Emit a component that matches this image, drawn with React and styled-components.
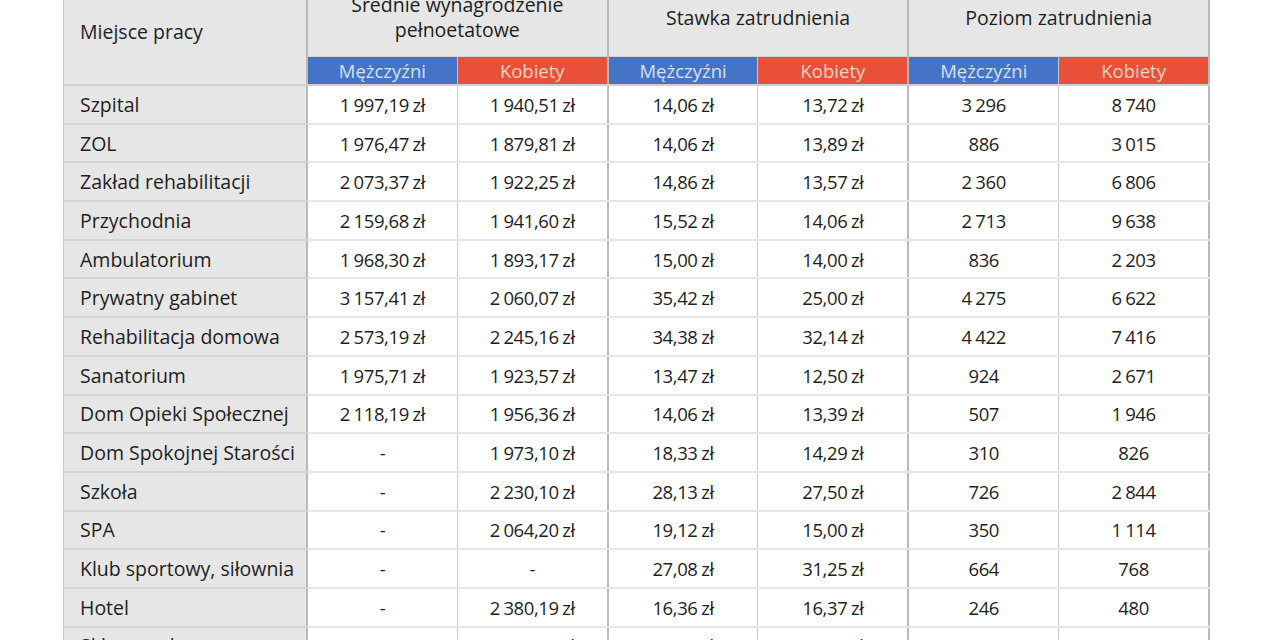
import styled, { createGlobalStyle } from "styled-components";

const GlobalStyle = createGlobalStyle`
  body {
    margin: 0;
    background: #ffffff;
    font-family: "Open Sans", "Noto Sans", sans-serif;
    overflow: hidden;
  }
`;

const rows = [
  ["Szpital", "1 997,19 zł", "1 940,51 zł", "14,06 zł", "13,72 zł", "3 296", "8 740"],
  ["ZOL", "1 976,47 zł", "1 879,81 zł", "14,06 zł", "13,89 zł", "886", "3 015"],
  ["Zakład rehabilitacji", "2 073,37 zł", "1 922,25 zł", "14,86 zł", "13,57 zł", "2 360", "6 806"],
  ["Przychodnia", "2 159,68 zł", "1 941,60 zł", "15,52 zł", "14,06 zł", "2 713", "9 638"],
  ["Ambulatorium", "1 968,30 zł", "1 893,17 zł", "15,00 zł", "14,00 zł", "836", "2 203"],
  ["Prywatny gabinet", "3 157,41 zł", "2 060,07 zł", "35,42 zł", "25,00 zł", "4 275", "6 622"],
  ["Rehabilitacja domowa", "2 573,19 zł", "2 245,16 zł", "34,38 zł", "32,14 zł", "4 422", "7 416"],
  ["Sanatorium", "1 975,71 zł", "1 923,57 zł", "13,47 zł", "12,50 zł", "924", "2 671"],
  ["Dom Opieki Społecznej", "2 118,19 zł", "1 956,36 zł", "14,06 zł", "13,39 zł", "507", "1 946"],
  ["Dom Spokojnej Starości", "-", "1 973,10 zł", "18,33 zł", "14,29 zł", "310", "826"],
  ["Szkoła", "-", "2 230,10 zł", "28,13 zł", "27,50 zł", "726", "2 844"],
  ["SPA", "-", "2 064,20 zł", "19,12 zł", "15,00 zł", "350", "1 114"],
  ["Klub sportowy, siłownia", "-", "-", "27,08 zł", "31,25 zł", "664", "768"],
  ["Hotel", "-", "2 380,19 zł", "16,36 zł", "16,37 zł", "246", "480"],
  ["Sklep medyczny", "-", "1 979,46 zł", "16,60 zł", "16,25 zł", "333", "1 091"],
];

const groups = ["Średnie wynagrodzenie pełnoetatowe", "Stawka zatrudnienia", "Poziom zatrudnienia"];

const Page = styled.div`
  padding-left: 63px;
  margin-top: -22px;
`;

const Table = styled.table`
  border-collapse: collapse;
  table-layout: fixed;
  width: 1147px;
  color: #1e1e1e;
  font-size: 19.5px;
  border-left: 1px solid #c9c9c9;
  border-right: 2px solid #bdbdbd;
`;

const PlaceHead = styled.th`
  width: 226px;
  background: #e6e6e6;
  text-align: left;
  font-weight: 500;
  padding: 0 0 0 16px;
  border-right: 2px solid #b9b9b9;
  border-bottom: 2px solid #cfcfcf;
  vertical-align: middle;
`;

const GroupHead = styled.th`
  height: 78px;
  background: #e6e6e6;
  font-weight: 500;
  line-height: 25px;
  padding: 0 30px;
  border-right: 2px solid #b9b9b9;
  border-bottom: 1px solid #d2d2d2;
  vertical-align: middle;
`;

const SexHead = styled.th`
  height: 27px;
  padding: 0;
  font-size: 18.5px;
  font-weight: 400;
  line-height: 27px;
  background: ${(p) => (p.$women ? "#e8503a" : "#4573c6")};
  color: ${(p) => (p.$women ? "#fcd3bf" : "#d3e2ff")};
  border-right: ${(p) => (p.$women ? "2px solid #b9b9b9" : "1px solid #c6c6c6")};
  border-bottom: 2px solid #cfcfcf;
`;

const Row = styled.tr`
  height: 38.7px;
`;

const Place = styled.td`
  background: #e6e6e6;
  padding: 0 0 0 16px;
  font-weight: 500;
  white-space: nowrap;
  border-right: 2px solid #b9b9b9;
  border-bottom: 2px solid #d3d3d3;
`;

const Cell = styled.td`
  text-align: center;
  padding: 0;
  font-size: 18.5px;
  letter-spacing: -0.4px;
  word-spacing: -0.8px;
  white-space: nowrap;
  border-bottom: 2px solid #e6e6e6;
  border-right: ${(p) => (p.$groupEnd ? "2px solid #b9b9b9" : "1px solid #cdcdcd")};
`;

export default function App() {
  return (
    <>
      <GlobalStyle />
      <Page>
        <Table>
          <thead>
            <tr>
              <PlaceHead rowSpan={2}>Miejsce pracy</PlaceHead>
              {groups.map((g) => (
                <GroupHead key={g} colSpan={2}>
                  {g}
                </GroupHead>
              ))}
            </tr>
            <tr>
              {groups.map((g) => [
                <SexHead key={g + "m"}>Mężczyźni</SexHead>,
                <SexHead key={g + "k"} $women>
                  Kobiety
                </SexHead>,
              ])}
            </tr>
          </thead>
          <tbody>
            {rows.map(([place, ...vals]) => (
              <Row key={place}>
                <Place>{place}</Place>
                {vals.map((v, i) => (
                  <Cell key={i} $groupEnd={i % 2 === 1}>
                    {v}
                  </Cell>
                ))}
              </Row>
            ))}
          </tbody>
        </Table>
      </Page>
    </>
  );
}
